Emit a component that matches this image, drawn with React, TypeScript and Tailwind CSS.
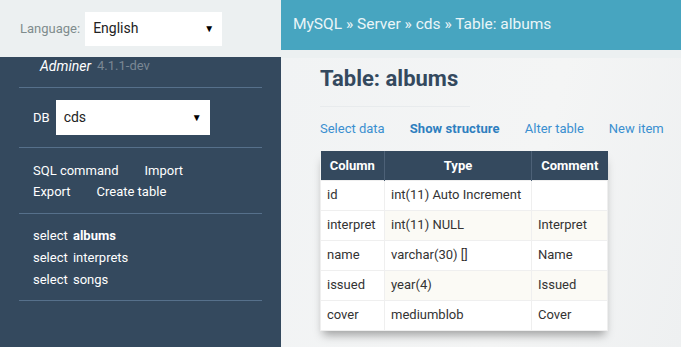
import React from 'react';

const rows = [
  { name: 'id', type: 'int(11) Auto Increment', comment: '' },
  { name: 'interpret', type: 'int(11) NULL', comment: 'Interpret' },
  { name: 'name', type: 'varchar(30) []', comment: 'Name' },
  { name: 'issued', type: 'year(4)', comment: 'Issued' },
  { name: 'cover', type: 'mediumblob', comment: 'Cover' },
];

const FakeSelect = ({ value, className }: { value: string; className: string }) => (
  <div className={`flex items-center justify-between bg-white text-[14px] text-[#222] pl-2 pr-2 ${className}`}>
    <span>{value}</span>
    <span className="text-[10px] text-black">▼</span>
  </div>
);

const Divider = () => <div className="mx-[19px] h-px bg-[#56708b]" />;

const App = () => {
  return (
    <div className="flex w-[681px] h-[347px] overflow-hidden font-['Roboto',sans-serif] bg-[#f1f3f4]">
      {/* left column */}
      <div className="w-[281px] shrink-0 flex flex-col">
        <div className="h-[57px] bg-[#ecf0f1] flex items-center pl-[20px] gap-[5px]">
          <span className="text-[13px] text-[#7f8c8d]">Language:</span>
          <FakeSelect value="English" className="w-[137px] h-[34px]" />
        </div>
        <div className="flex-1 bg-[#34495e] text-white text-[13px]">
          <div className="pl-[40px] pt-[1px] h-[30px] flex items-start gap-[6px] leading-[16px]">
            <span className="italic text-[14px]">Adminer</span>
            <span className="text-[#7a8794]">4.1.1-dev</span>
          </div>
          <Divider />
          <div className="flex items-center pl-[33px] gap-[6px] h-[59px]">
            <span>DB</span>
            <FakeSelect value="cds" className="w-[154px] h-[35px]" />
          </div>
          <Divider />
          <div className="pl-[33px] pt-[12px] pb-[11px] leading-[21px]">
            <div className="flex gap-[26px]">
              <span>SQL command</span>
              <span>Import</span>
            </div>
            <div className="flex gap-[26px]">
              <span>Export</span>
              <span>Create table</span>
            </div>
          </div>
          <Divider />
          <div className="pl-[33px] pt-[11px] pb-[9px] leading-[22px]">
            <div>select <span className="font-bold ml-[2px]">albums</span></div>
            <div>select <span className="ml-[2px]">interprets</span></div>
            <div>select <span className="ml-[2px]">songs</span></div>
          </div>
          <Divider />
        </div>
      </div>

      {/* right column */}
      <div className="flex-1 flex flex-col">
        <div className="h-[50px] bg-[#47a5c0] flex items-center pl-[12px] text-[15.5px] text-[#eaf5f8]">
          MySQL » Server » cds » Table: albums
        </div>
        <div className="h-[8px] bg-[#ecf0f1]" />
        <div className="flex-1 pl-[39px] bg-[linear-gradient(105deg,#f1f3f4_0%,#f4f5f5_60%,#eef0f1_100%)]">
          <h2 className="text-[22px] font-bold text-[#34495e] pt-[8px] leading-[26px]">Table: albums</h2>
          <div className="mt-[14px] h-px bg-[#e8ebed] w-[150px]" />
          <div className="flex gap-[25px] text-[13px] text-[#3a8fd0] mt-[14px] leading-[16px]">
            <span>Select data</span>
            <span className="font-bold text-[#2e7fbf] tracking-[0.1px]">Show structure</span>
            <span>Alter table</span>
            <span>New item</span>
          </div>
          <table className="mt-[14px] border-collapse text-[13px] text-[#333] shadow-[0_7px_9px_-3px_rgba(0,0,0,0.35)]">
            <thead>
              <tr className="bg-[#34495e] text-white h-[29px]">
                <th className="w-[64px] border-r border-[#4d6177] font-bold text-center px-[7px]">Column</th>
                <th className="w-[147px] border-r border-[#4d6177] font-bold text-center px-[7px]">Type</th>
                <th className="w-[76px] font-bold text-center px-[7px]">Comment</th>
              </tr>
            </thead>
            <tbody>
              {rows.map((r, i) => (
                <tr key={r.name} className="h-[30px]">
                  <td className="bg-white border border-[#efefef] px-[6px]">{r.name}</td>
                  <td className={`border border-[#efefef] px-[6px] ${i % 2 === 1 ? 'bg-[#fbfaf5]' : 'bg-white'}`}>{r.type}</td>
                  <td className={`border border-[#efefef] px-[6px] ${i % 2 === 1 ? 'bg-[#fbfaf5]' : 'bg-white'}`}>{r.comment}</td>
                </tr>
              ))}
            </tbody>
          </table>
        </div>
      </div>
    </div>
  );
};

export default App;
